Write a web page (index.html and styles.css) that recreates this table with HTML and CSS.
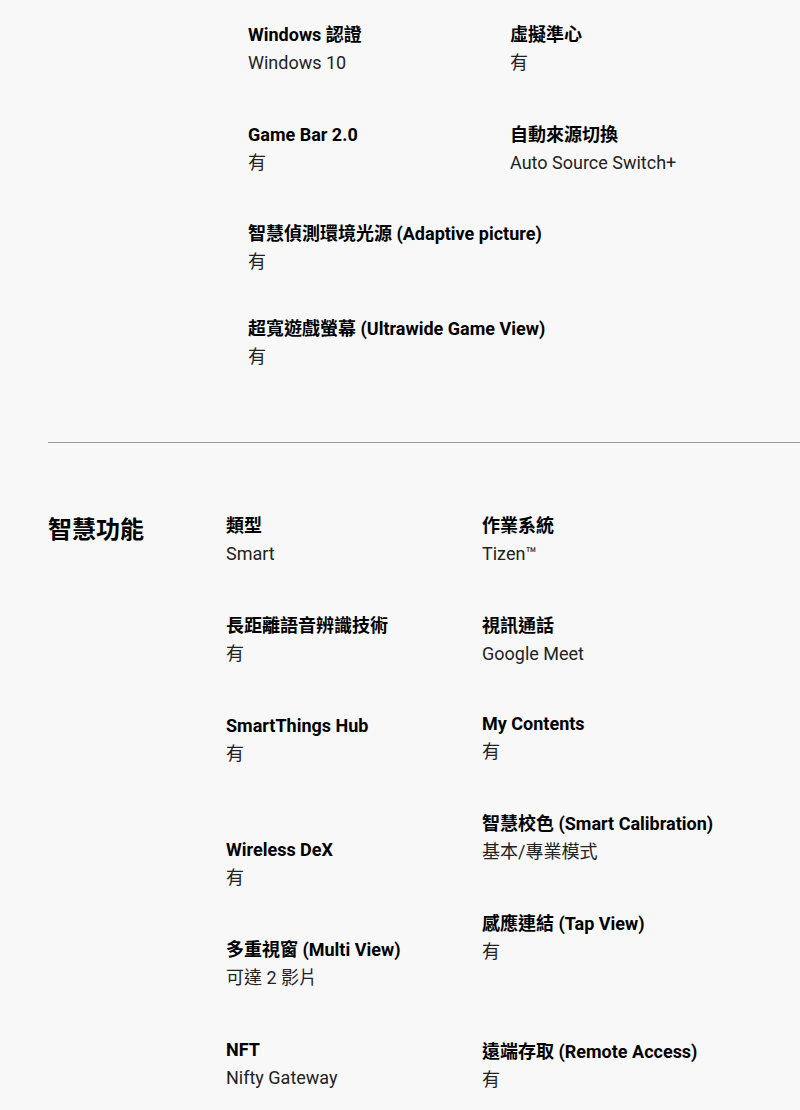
FILE: index.html
```html
<!DOCTYPE html>
<html lang="zh-Hant">
<head>
<meta charset="utf-8">
<link rel="stylesheet" href="styles.css">
</head>
<body>
<div class="page">
  <section class="spec spec--cont">
    <div class="spec__grid spec__grid--top">
      <div class="row">
        <div class="item"><div class="item__title">Windows 認證</div><div class="item__value">Windows 10</div></div>
        <div class="item"><div class="item__title">虛擬準心</div><div class="item__value">有</div></div>
      </div>
      <div class="row row--g44">
        <div class="item"><div class="item__title">Game Bar 2.0</div><div class="item__value">有</div></div>
        <div class="item"><div class="item__title">自動來源切換</div><div class="item__value">Auto Source Switch+</div></div>
      </div>
      <div class="row row--g43">
        <div class="item item--wide"><div class="item__title">智慧偵測環境光源 (Adaptive picture)</div><div class="item__value">有</div></div>
      </div>
      <div class="row row--g39">
        <div class="item item--wide"><div class="item__title">超寬遊戲螢幕 (Ultrawide Game View)</div><div class="item__value">有</div></div>
      </div>
    </div>
  </section>
  <hr class="divider">
  <section class="spec spec--smart">
    <h2 class="spec__heading">智慧功能</h2>
    <div class="spec__cols">
      <div class="col">
        <div class="item"><div class="item__title">類型</div><div class="item__value">Smart</div></div>
        <div class="item item--g44"><div class="item__title">長距離語音辨識技術</div><div class="item__value">有</div></div>
        <div class="item item--g44"><div class="item__title">SmartThings Hub</div><div class="item__value">有</div></div>
        <div class="item item--g68"><div class="item__title">Wireless DeX</div><div class="item__value">有</div></div>
        <div class="item item--g44"><div class="item__title">多重視窗 (Multi View)</div><div class="item__value">可達 2 影片</div></div>
        <div class="item item--g44"><div class="item__title">NFT</div><div class="item__value">Nifty Gateway</div></div>
      </div>
      <div class="col">
        <div class="item"><div class="item__title">作業系統</div><div class="item__value">Tizen™</div></div>
        <div class="item item--g44"><div class="item__title">視訊通話</div><div class="item__value">Google Meet</div></div>
        <div class="item item--g42"><div class="item__title">My Contents</div><div class="item__value">有</div></div>
        <div class="item item--g44"><div class="item__title">智慧校色 (Smart Calibration)</div><div class="item__value">基本/專業模式</div></div>
        <div class="item item--g44"><div class="item__title">感應連結 (Tap View)</div><div class="item__value">有</div></div>
        <div class="item item--g72"><div class="item__title">遠端存取 (Remote Access)</div><div class="item__value">有</div></div>
      </div>
    </div>
  </section>
</div>
</body>
</html>
```
FILE: styles.css
```css
html, body {
  margin: 0;
  padding: 0;
  background: #f8f8f8;
}
body {
  font-family: Roboto, "Noto Sans CJK TC", sans-serif;
  font-size: 18px;
  color: #000;
}
.page {
  width: 800px;
  height: 1110px;
  overflow: hidden;
}
.spec--cont {
  padding: 21px 0 0 248px;
}
.row {
  display: flex;
}
.row .item {
  width: 262px;
}
.row .item--wide {
  width: auto;
}
.row--g44 { margin-top: 44px; }
.row--g43 { margin-top: 43px; }
.row--g39 { margin-top: 39px; }
.item__title {
  font-weight: 700;
  line-height: 28px;
  white-space: nowrap;
}
.item__value {
  line-height: 28px;
  color: #222;
  white-space: nowrap;
}
.divider {
  margin: 71px 0 0 48px;
  border: 0;
  border-top: 1px solid #999;
  height: 0;
}
.spec--smart {
  display: flex;
  padding: 69px 0 0 48px;
}
.spec__heading {
  margin: 0;
  width: 178px;
  font-size: 24px;
  font-weight: 700;
  line-height: 36px;
  flex-shrink: 0;
}
.spec__cols {
  display: flex;
}
.col {
  width: 256px;
  display: flex;
  flex-direction: column;
}
.item--g42 { margin-top: 42px; }
.item--g44 { margin-top: 44px; }
.item--g68 { margin-top: 68px; }
.item--g72 { margin-top: 72px; }
```
